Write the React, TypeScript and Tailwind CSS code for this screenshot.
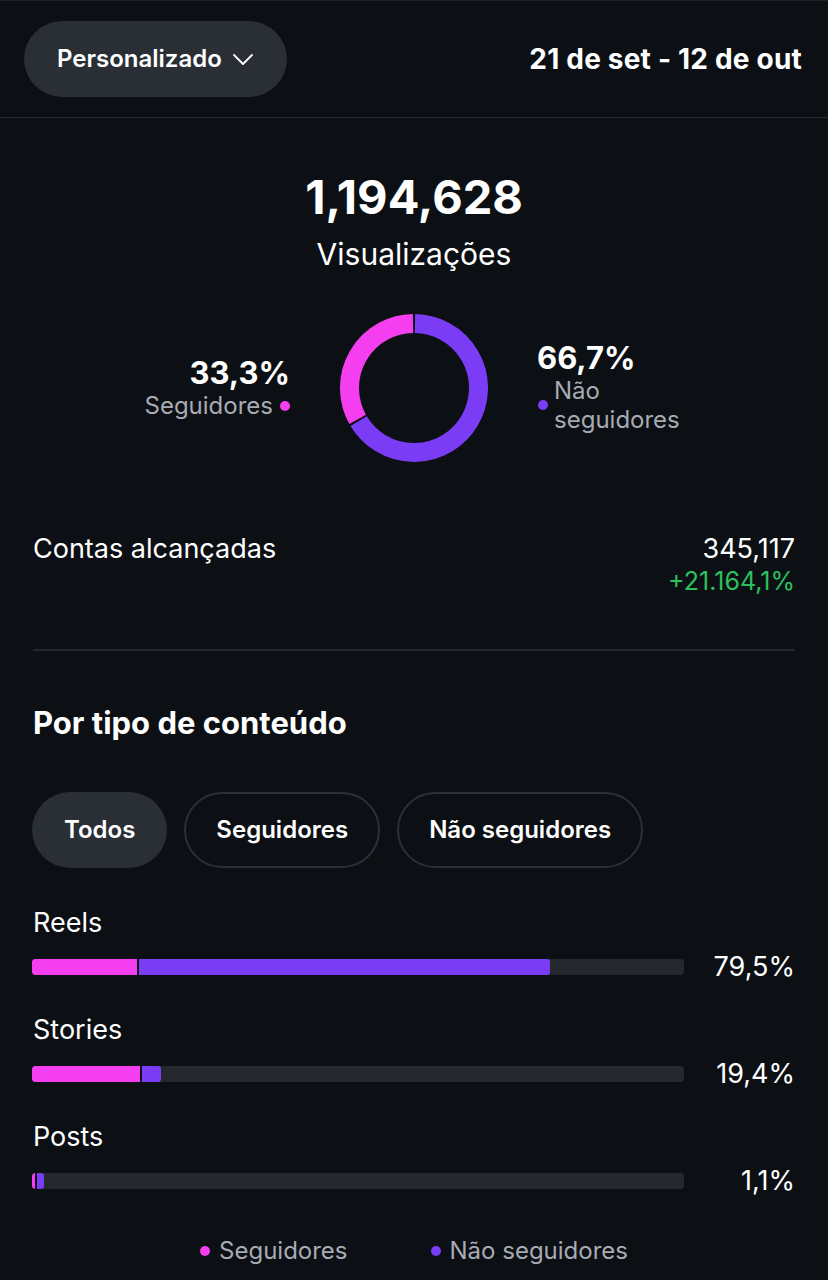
import React from "react";

const PINK = "#f43ef0";
const PURPLE = "#7b3cf6";

function arcPath(cx: number, cy: number, r: number, a0: number, a1: number) {
  const toXY = (a: number) => {
    const rad = ((a - 90) * Math.PI) / 180;
    return [cx + r * Math.cos(rad), cy + r * Math.sin(rad)];
  };
  const [x0, y0] = toXY(a0);
  const [x1, y1] = toXY(a1);
  const large = a1 - a0 > 180 ? 1 : 0;
  return `M ${x0} ${y0} A ${r} ${r} 0 ${large} 1 ${x1} ${y1}`;
}

function Donut() {
  const c = 74;
  const r = 64.5;
  return (
    <svg width="148" height="148" viewBox="0 0 148 148">
      <path d={arcPath(c, c, r, 0.9, 239.1)} stroke={PURPLE} strokeWidth="19" fill="none" />
      <path d={arcPath(c, c, r, 240.9, 359.1)} stroke={PINK} strokeWidth="19" fill="none" />
    </svg>
  );
}

function Bar({ label, pct, pink, purple }: { label: string; pct: string; pink: number; purple: number }) {
  return (
    <div className="flex flex-col">
      <div className="text-[27px] leading-[32px] text-white">{label}</div>
      <div className="mt-[12px] flex h-[32px] items-center">
        <div className="relative -ml-[1px] h-[16px] w-[652px] overflow-hidden rounded-[3px] bg-[#25282d]">
          <div className="flex h-full">
            <div className="h-full rounded-l-[3px]" style={{ width: pink, background: PINK }} />
            <div className="h-full w-[2px] bg-[#0c1014]" />
            <div className="h-full rounded-r-[3px]" style={{ width: purple, background: PURPLE }} />
          </div>
        </div>
        <div className="flex-1 text-right text-[27px] leading-[32px] text-white">{pct}</div>
      </div>
    </div>
  );
}

export default function App() {
  return (
    <div
      className="min-h-[1280px] w-[828px] bg-[#0c1014] text-white"
      style={{ fontFamily: "Inter, 'Noto Sans', sans-serif" }}
    >
      <div className="h-[1px] bg-[#1c2026]" />
      <div className="flex h-[117px] items-center justify-between border-b border-[#262a30] pl-6 pr-[26px]">
        <div className="flex h-[76px] items-center gap-[11px] rounded-full bg-[#2a2e35] pl-[33px] pr-[34px]">
          <span className="text-[24px] font-semibold">Personalizado</span>
          <svg width="20" height="11" viewBox="0 0 20 11" fill="none">
            <path d="M1 1 L10 10 L19 1" stroke="white" strokeWidth="1.8" strokeLinecap="round" strokeLinejoin="round" />
          </svg>
        </div>
        <div className="text-[28px] font-bold tracking-[0.2px]">21 de set - 12 de out</div>
      </div>

      <div className="flex flex-col items-center pt-[55px]">
        <div className="text-[47px] font-bold leading-none">1,194,628</div>
        <div className="mt-[16px] text-[30px] leading-[36px]">Visualizações</div>
        <div className="mt-[42px] flex items-center">
          <div className="flex w-[290px] flex-col items-end">
            <div className="text-[31px] font-bold leading-[36px]">33,3%</div>
            <div className="flex items-center gap-[7px]">
              <span className="text-[24px] leading-[30px] text-[#a8abb3]">Seguidores</span>
              <span className="h-[10px] w-[10px] rounded-full" style={{ background: PINK }} />
            </div>
          </div>
          <div className="mx-[50px]">
            <Donut />
          </div>
          <div className="flex w-[290px] flex-col items-start pb-[2px]">
            <div className="-ml-[1px] text-[31px] font-bold leading-[36px]">66,7%</div>
            <div className="flex items-center gap-[6px]">
              <span className="h-[10px] w-[10px] rounded-full" style={{ background: PURPLE }} />
              <span className="text-[24px] leading-[29px] text-[#a8abb3]">
                Não
                <br />
                seguidores
              </span>
            </div>
          </div>
        </div>
      </div>

      <div className="px-[33px]">
        <div className="mt-[71px] flex items-start justify-between">
          <div className="text-[27px] leading-[32px]">Contas alcançadas</div>
          <div className="flex flex-col items-end">
            <div className="text-[27px] leading-[32px]">345,117</div>
            <div className="text-[25px] leading-[32px] text-[#2dc05e]">+21.164,1%</div>
          </div>
        </div>
        <div className="mt-[52px] h-[2px] bg-[#24282d]" />
        <div className="mt-[54px] text-[31px] font-bold leading-[36px]">Por tipo de conteúdo</div>
        <div className="-ml-[1px] mt-[51px] flex gap-[17px]">
          <div className="flex h-[76px] items-center rounded-full bg-[#2a2e35] px-[32px] text-[24px] font-semibold">Todos</div>
          <div className="flex h-[76px] items-center rounded-full border-2 border-[#2c3036] px-[30px] text-[24px] font-semibold">Seguidores</div>
          <div className="flex h-[76px] items-center rounded-full border-2 border-[#2c3036] px-[30px] text-[24px] font-semibold">Não seguidores</div>
        </div>
        <div className="mt-[39px] flex flex-col gap-[31px]">
          <Bar label="Reels" pct="79,5%" pink={105} purple={411} />
          <Bar label="Stories" pct="19,4%" pink={108} purple={19} />
          <Bar label="Posts" pct="1,1%" pink={3} purple={7} />
        </div>
        <div className="mt-[39px] flex justify-center gap-[83px]">
          <div className="flex items-center gap-[9px]">
            <span className="h-[10px] w-[10px] rounded-full" style={{ background: PINK }} />
            <span className="text-[24px] leading-[30px] text-[#a8abb3]">Seguidores</span>
          </div>
          <div className="flex items-center gap-[9px]">
            <span className="h-[10px] w-[10px] rounded-full" style={{ background: PURPLE }} />
            <span className="text-[24px] leading-[30px] text-[#a8abb3]">Não seguidores</span>
          </div>
        </div>
      </div>
    </div>
  );
}
